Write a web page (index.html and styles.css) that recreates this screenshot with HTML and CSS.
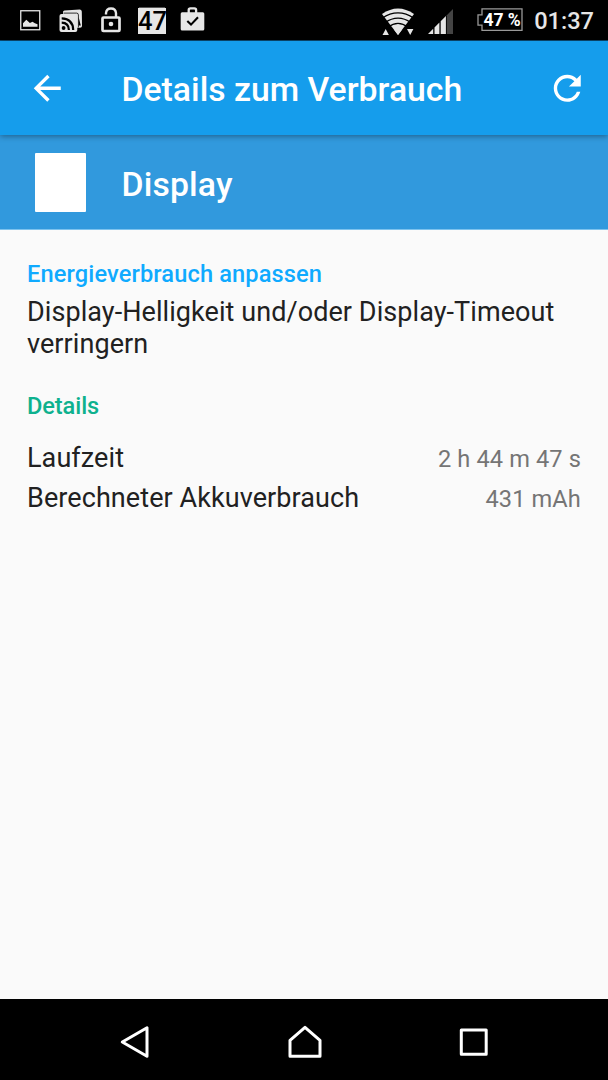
FILE: index.html
```html
<!DOCTYPE html>
<html lang="de">
  <head>
    <meta charset="UTF-8" />
    <meta name="viewport" content="width=device-width, initial-scale=1.0" />
    <title>Details zum Verbrauch</title>
    <link rel="stylesheet" href="styles.css">
  </head>

  <body>
    <div class="status-bar">
      <div class="notifications">
        <svg class="icon-image" width="21" height="21" viewBox="0 0 21 21">
          <rect x="0.75" y="0.75" width="19" height="19" fill="none" stroke="currentColor" stroke-width="1.3" />
          <path d="M3 16.8v-3.6L6.3 9.8l3.6 3.2 2.6-1.3 2.4 1.6 2.6 1v2.5z" fill="currentColor" />
        </svg>
        <svg class="icon-cast" width="24" height="24" viewBox="0 0 24 24">
          <path d="M4 3Q4 1.7 5.5 1.6L20.5.4Q22.6.3 22.8 2.5L23 17q0 1.8-2 1.8h-4L4 5z" fill="currentColor" />
          <path d="M4.5 4.1h13.2q1.7 0 1.7 1.8v12.5" fill="none" stroke="#000" stroke-width="0.8" />
          <path d="M19.6 8l2.2 8.5h-2.2z" fill="#000" />
          <rect x="0.5" y="5" width="17.8" height="18" rx="2" fill="currentColor" />
          <circle cx="4.6" cy="19" r="1.9" fill="#000" />
          <path d="M2.7 13.7q7 .2 7.2 7.3M2.7 9.4q11.2.4 11.5 11.6" fill="none" stroke="#000" stroke-width="2.2" />
        </svg>
        <svg class="icon-lock" width="20" height="26" viewBox="0 0 20 26">
          <rect x="1.5" y="10.5" width="17" height="13.5" rx="1" fill="none" stroke="currentColor" stroke-width="2.7" />
          <path d="M5 7.5V6q.4-4.5 5-4.5t5 4.5v4.5" fill="none" stroke="currentColor" stroke-width="2.4" />
          <circle cx="10" cy="17" r="2.3" fill="currentColor" />
        </svg>
        <div class="battery-badge">47</div>
        <svg class="icon-shop" width="25" height="24" viewBox="0 0 25 24">
          <path d="M8.7 6V3q0-1.6 1.7-1.6h4q1.7 0 1.7 1.6v3" fill="none" stroke="currentColor" stroke-width="2.3" />
          <rect x="0.7" y="5.2" width="23.6" height="18.3" rx="1.5" fill="currentColor" />
          <path d="M7.3 14l3.7 3.6 7-7.4" fill="none" stroke="#000" stroke-width="2.1" />
        </svg>
      </div>
      <div class="system">
        <svg class="icon-wifi" width="34" height="28" viewBox="0 0 34 28">
          <path d="M1 6Q17-5 33 6L17 27z" fill="currentColor" />
          <path d="M1 10.2q16-10.5 32 0M4 14.7q13-9 26 0M7 19.2q10-7.5 20 0" fill="none" stroke="#000" stroke-width="1.2" />
          <path d="M0 28V19.5h8l5.5 8.5zM34 28v-8.5h-8L20.5 28z" fill="#000" />
          <path d="M1.5 27l3.2-6 3.2 6zM26 21h6.4l-3.2 6zM13.3 22h7.4L17 27z" fill="currentColor" />
        </svg>
        <svg class="icon-signal" width="26" height="26" viewBox="0 0 26 26">
          <path d="M0 25l5.2-5.2V25zM6.5 18.5l4.9-4.9V25H6.5zM12.7 12.3l5.2-5.2V25h-5.2z" fill="currentColor" />
          <path d="M18.8 6.2L25 0v25h-6.2z" fill="#444" />
        </svg>
        <div class="battery">
          <svg width="46" height="24" viewBox="0 0 46 24">
            <path d="M5 .8h40v21.6H5v-5.2H1V6.8h4z" fill="none" stroke="#999" stroke-width="1.3" />
          </svg>
          <span class="battery-level">47 %</span>
        </div>
        <span class="clock">01:37</span>
      </div>
    </div>

    <header class="app-bar">
      <svg class="back" viewBox="0 0 24 24">
        <path d="M20 11H7.83l5.59-5.59L12 4l-8 8 8 8 1.41-1.41L7.83 13H20v-2z" fill="currentColor" />
      </svg>
      <h1>Details zum Verbrauch</h1>
      <svg class="refresh" viewBox="0 0 24 24">
        <path d="M17.65 6.35C16.2 4.9 14.21 4 12 4c-4.42 0-7.99 3.58-7.99 8s3.57 8 7.99 8c3.73 0 6.84-2.55 7.73-6h-2.08c-.82 2.33-3.04 4-5.65 4-3.31 0-6-2.69-6-6s2.69-6 6-6c1.66 0 3.14.69 4.22 1.78L13 11h7V4l-2.35 2.35z" fill="currentColor" />
      </svg>
    </header>

    <div class="entry">
      <div class="entry-icon"></div>
      <h2>Display</h2>
    </div>

    <main>
      <h3 class="adjust">Energieverbrauch anpassen</h3>
      <p>Display-Helligkeit und/oder Display-Timeout verringern</p>

      <h3 class="details">Details</h3>
      <div class="row">
        <span>Laufzeit</span>
        <span class="value">2 h 44 m 47 s</span>
      </div>
      <div class="row">
        <span>Berechneter Akkuverbrauch</span>
        <span class="value">431 mAh</span>
      </div>
    </main>

    <nav class="nav-bar">
      <svg width="30" height="34" viewBox="0 0 30 34">
        <path d="M2.3 17L27 2.7v28.6z" />
      </svg>
      <svg width="34" height="34" viewBox="0 0 34 34">
        <path d="M2 15.3L17 2.3l15 13v16H2z" />
      </svg>
      <svg width="30" height="30" viewBox="0 0 30 30">
        <path d="M2.3 3h24.9v24.2H2.3z" />
      </svg>
    </nav>
  </body>
</html>
```
FILE: styles.css
```css
* {
  box-sizing: border-box;
}

body {
  margin: 0;
  height: 1080px;
  display: flex;
  flex-direction: column;
  font-family: Roboto, sans-serif;
  background-color: #fafafa;
  color: #212121;
  overflow: hidden;
}

h1,
h2,
h3,
p {
  margin: 0;
}

svg {
  display: block;
  flex: none;
}

.status-bar {
  height: 41px;
  flex: none;
  display: flex;
  justify-content: space-between;
  padding: 0 14px 0 20px;
  background-color: #000;
  border-bottom: 1px solid #0c4b73;
  color: #e6e6e6;
}

.notifications,
.system {
  display: flex;
  align-items: flex-start;
}

.icon-image {
  margin-top: 10px;
}

.icon-cast {
  margin: 9px 0 0 18px;
}

.icon-lock {
  margin: 7px 0 0 18px;
}

.battery-badge {
  width: 28px;
  height: 26px;
  margin: 8px 0 0 17px;
  background-color: #e6e6e6;
  box-shadow: 0 -2px 0 -1px #555;
  color: #000;
  font-size: 25.5px;
  font-weight: 500;
  line-height: 27px;
  text-align: center;
}

.icon-shop {
  margin: 7px 0 0 14px;
}

.icon-wifi {
  margin-top: 8px;
}

.icon-signal {
  margin: 9px 0 0 13px;
}

.battery {
  position: relative;
  margin: 8px 0 0 23px;
}

.battery-level {
  position: absolute;
  top: 0;
  left: 6px;
  width: 38px;
  font-size: 17.5px;
  font-weight: 700;
  line-height: 24px;
  text-align: center;
  white-space: nowrap;
  color: #fff;
}

.clock {
  margin-left: 11px;
  font-size: 23.6px;
  font-weight: 500;
  line-height: 43px;
}

.app-bar {
  position: relative;
  height: 94px;
  flex: none;
  display: flex;
  align-items: center;
  padding: 0 21px 0 27px;
  background-color: #159dec;
  box-shadow: 0 1px 6px rgba(0, 0, 0, 0.4);
  color: #fff;
}

.back,
.refresh {
  width: 40.5px;
  height: 40.5px;
}

.app-bar h1,
.entry h2 {
  font-size: 33.75px;
  font-weight: 500;
  line-height: 40px;
}

.app-bar h1 {
  flex: 1;
  padding: 3px 0 0 54px;
}

.entry {
  height: 95px;
  flex: none;
  display: flex;
  align-items: center;
  padding-left: 35px;
  background-color: #3199dd;
  border-bottom: 1px solid #7dc3ee;
  color: #fff;
}

.entry-icon {
  width: 51px;
  height: 59px;
  border-radius: 1px;
  background-color: #fff;
}

.entry h2 {
  padding: 5px 0 0 35.5px;
  letter-spacing: 0.15px;
}

main {
  flex: 1;
  padding: 30px 27px 0;
}

h3 {
  font-size: 23.6px;
  font-weight: 500;
  line-height: 28px;
}

.adjust {
  color: #0faaff;
  letter-spacing: 0.13px;
}

main p {
  margin-top: 8px;
  font-size: 27px;
  line-height: 32px;
  letter-spacing: 0.07px;
}

.details {
  margin: 32px 0 18px;
  color: #0eb18e;
  letter-spacing: -0.1px;
}

.row {
  display: flex;
  justify-content: space-between;
  align-items: baseline;
  height: 40px;
  font-size: 27px;
  line-height: 40px;
  letter-spacing: 0.08px;
}

.value {
  font-size: 23.6px;
  letter-spacing: 0.12px;
  color: #757575;
}

.nav-bar {
  height: 81px;
  flex: none;
  display: flex;
  align-items: center;
  justify-content: space-between;
  padding: 5px 119px 0 120px;
  background-color: #000;
}

.nav-bar path {
  fill: none;
  stroke: #fff;
  stroke-width: 3;
  stroke-linejoin: round;
}
```
